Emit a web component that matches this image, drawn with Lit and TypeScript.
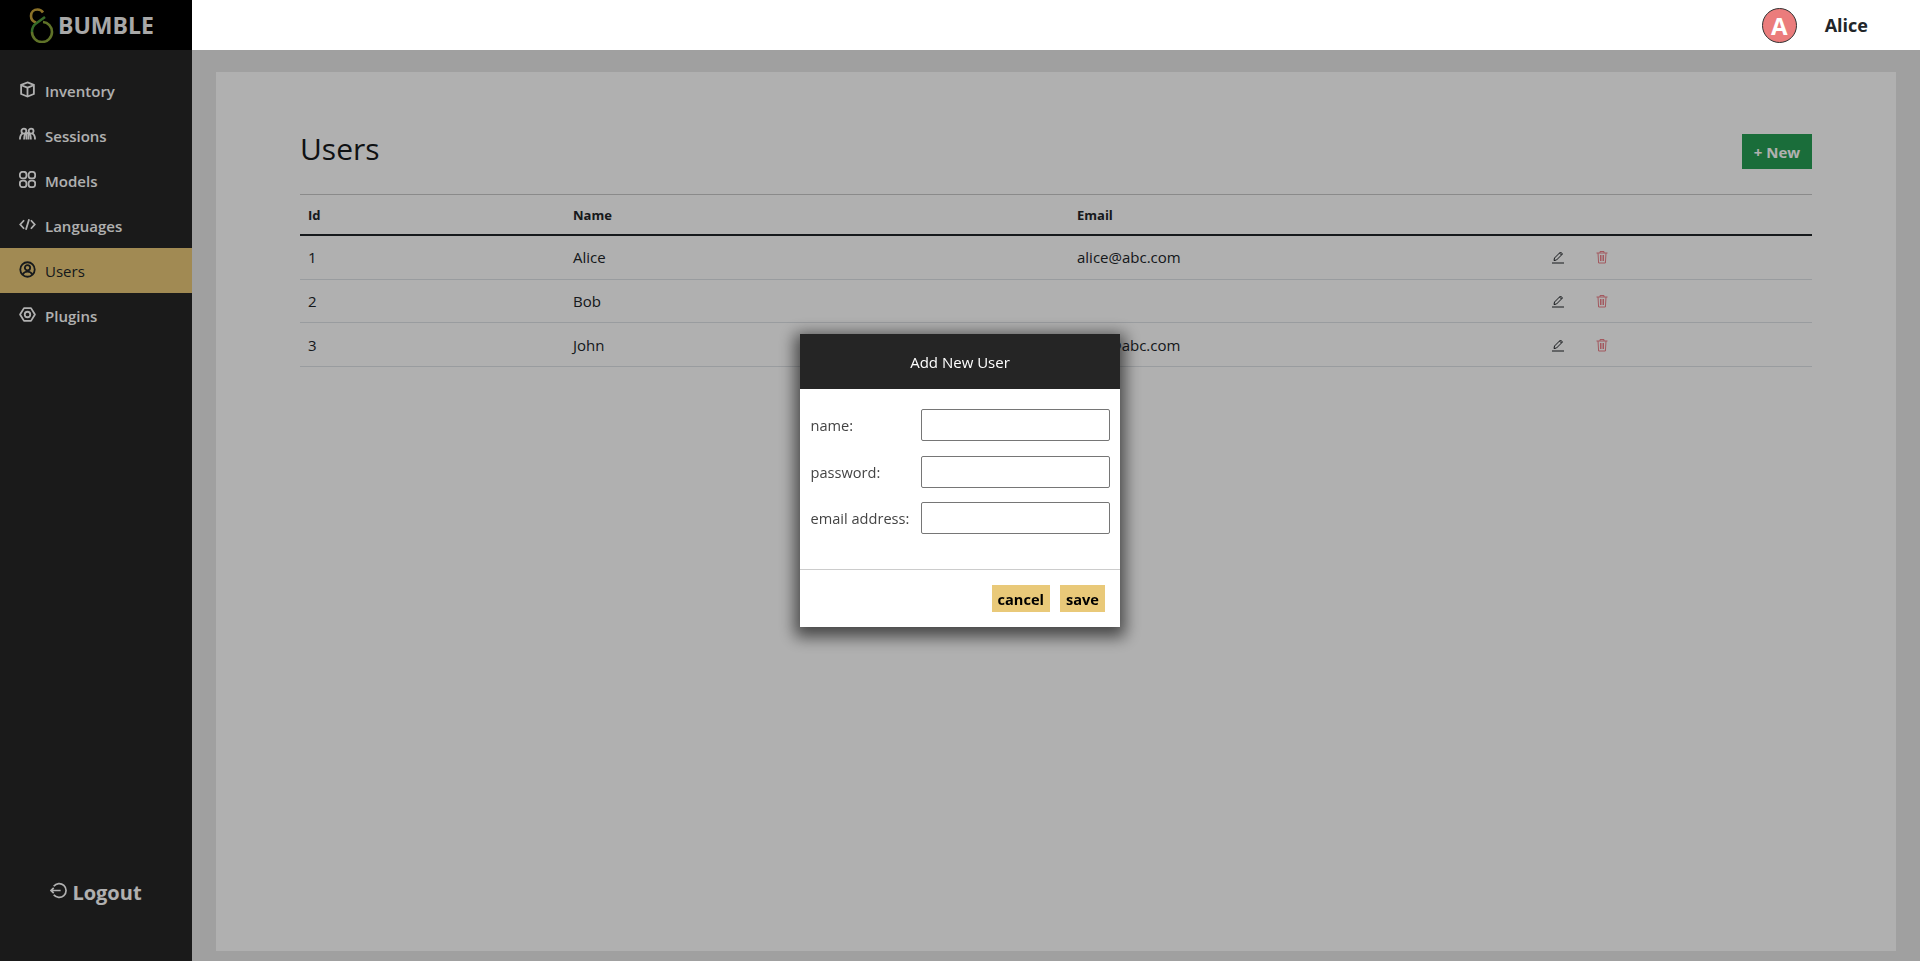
import { LitElement, html, css, svg } from "lit";
import { customElement } from "lit/decorators.js";

const navIcons: Record<string, unknown> = {
  box: svg`<path d="M8 1.300 14 3.600v8.600l-6 2.500-6-2.500V3.600z"/><path d="M2.200 4 8 6.300 13.800 4M8 6.300v8.200"/>`,
  people: svg`<circle cx="4.600" cy="4.800" r="2.300"/><circle cx="11.400" cy="4.800" r="2.300"/><path d="M.9 12.800c0-3 1-5.300 3-5.800M15.100 12.800c0-3-1-5.300-3-5.800"/><path d="M4.800 12.800c0-3.600 1-6.200 3.200-6.200s3.200 2.600 3.200 6.200"/><path d="M7 7.500v5.300M9 7.500v5.300"/>`,
  models: svg`<rect x=".8" y=".8" width="6.200" height="6.200" rx="2.600"/><rect x="9" y=".8" width="6.200" height="6.200" rx="2.600"/><rect x=".8" y="9" width="6.200" height="6.200" rx="2.600"/><rect x="9" y="9" width="6.200" height="6.200" rx="2.600"/>`,
  code: svg`<path d="M4.800 4 1.200 8l3.600 4M11.200 4l3.600 4-3.600 4M9.500 3 6.500 13"/>`,
  user: svg`<circle cx="8" cy="8" r="6.800"/><circle cx="8" cy="6.300" r="2.500"/><path d="M3.500 12.800C4.300 10.800 6 10 8 10s3.700.8 4.500 2.800"/>`,
  plugin: svg`<path d="M4.700 2h6.600L15 8l-3.700 6H4.700L1 8z" stroke-linejoin="round"/><circle cx="8" cy="8" r="2.600"/>`,
};

const navItems = [
  { label: "Inventory", icon: "box" },
  { label: "Sessions", icon: "people" },
  { label: "Models", icon: "models" },
  { label: "Languages", icon: "code" },
  { label: "Users", icon: "user", active: true },
  { label: "Plugins", icon: "plugin" },
];

const users = [
  { id: 1, name: "Alice", email: "alice@abc.com" },
  { id: 2, name: "Bob", email: "" },
  { id: 3, name: "John", email: "john@abc.com" },
];

@customElement("app-root")
export class AppRoot extends LitElement {
  static styles = css`
    :host {
      display: block;
      height: 961px;
      font-family: "Open Sans", "Noto Sans", sans-serif;
      color: #212529;
      overflow: hidden;
    }
    .page {
      display: flex;
      height: 100%;
    }
    .sidebar {
      width: 192px;
      flex: none;
      background: #262626;
      display: flex;
      flex-direction: column;
    }
    .logo {
      height: 50px;
      flex: none;
      background: #000;
      color: #f4f4f4;
      display: flex;
      align-items: center;
      padding-left: 28px;
      gap: 4px;
      font-size: 23px;
      font-weight: 700;
    }
    .logo svg {
      width: 26px;
      height: 36px;
    }
    nav {
      padding-top: 18px;
      flex: 1;
    }
    .nav-item {
      height: 45px;
      display: flex;
      align-items: center;
      gap: 9px;
      padding-left: 19px;
      color: #fff;
      font-size: 15px;
      font-weight: 600;
    }
    .nav-item.active {
      background: #e9c979;
      color: #212529;
      font-weight: 500;
    }
    .nav-item svg {
      width: 17px;
      height: 17px;
      flex: none;
      margin-top: -3px;
      fill: none;
      stroke: currentColor;
      stroke-width: 1.700;
    }
    .logout {
      height: 50px;
      margin-bottom: 44px;
      display: flex;
      align-items: center;
      justify-content: center;
      gap: 5px;
      color: #fff;
      font-size: 20px;
      font-weight: 700;
    }
    .logout svg {
      width: 17px;
      height: 17px;
      fill: none;
      stroke: currentColor;
      stroke-width: 1.600;
      margin-top: -3px;
    }
    .right {
      flex: 1;
      min-width: 0;
      display: flex;
      flex-direction: column;
    }
    header {
      height: 50px;
      flex: none;
      background: #fff;
      display: flex;
      align-items: center;
      justify-content: flex-end;
      padding-right: 52px;
      gap: 28px;
      position: relative;
      z-index: 2;
    }
    .avatar {
      width: 35px;
      height: 35px;
      box-sizing: border-box;
      border-radius: 50%;
      border: 1px solid #333;
      background: #eb7c7c;
      color: #fff;
      display: flex;
      align-items: center;
      justify-content: center;
      font-size: 24px;
      font-weight: 700;
    }
    .who {
      font-size: 18px;
      font-weight: 700;
    }
    main {
      flex: 1;
      background: #e8e8e8;
      padding: 22px 24px 10px;
      display: flex;
      min-height: 0;
    }
    .card {
      flex: 1;
      background: #fff;
      padding: 62px 84px 0;
    }
    .title-row {
      display: flex;
      justify-content: space-between;
      height: 60px;
    }
    h1 {
      margin: 0;
      font-size: 30px;
      font-weight: 500;
      line-height: 30px;
      color: #16191c;
    }
    .new {
      width: 70px;
      height: 35px;
      box-sizing: border-box;
      border: none;
      background: #269f54;
      color: #fff;
      font: 700 15px "Open Sans", sans-serif;
    }
    table {
      width: 100%;
      table-layout: fixed;
      border-collapse: collapse;
      font-size: 15px;
    }
    th {
      height: 39px;
      text-align: left;
      font-size: 13px;
      font-weight: 700;
      padding: 0 8px;
      border-top: 1px solid #c8c8c8;
      border-bottom: 2px solid #212529;
    }
    td {
      height: 42.700px;
      padding: 0 8px;
      border-bottom: 1px solid #dee2e6;
    }
    .actions {
      display: flex;
      gap: 30px;
      align-items: center;
    }
    .actions svg {
      width: 14px;
      height: 14px;
      fill: none;
      stroke-width: 1;
    }
    .edit {
      stroke: #212529;
    }
    .del {
      stroke: #ec8089;
      stroke-width: 0.9;
    }
    .overlay {
      position: fixed;
      inset: 0;
      z-index: 1;
      background: rgba(0, 0, 0, 0.31);
      display: flex;
      align-items: center;
      justify-content: center;
    }
    .modal {
      width: 320px;
      height: 293px;
      background: #fff;
      display: flex;
      flex-direction: column;
      box-shadow: 0 5px 15px 5px rgba(0, 0, 0, 0.6);
      position: relative;
      z-index: 3;
    }
    .modal-head {
      height: 55px;
      flex: none;
      background: #252525;
      color: #fff;
      display: flex;
      align-items: center;
      justify-content: center;
      font-size: 15px;
    }
    .form {
      flex: 1;
      padding: 20px 10px 0 10.500px;
      display: grid;
      grid-template-columns: 110.500px 189px;
      grid-auto-rows: 32px;
      row-gap: 14.500px;
      align-items: center;
      font-size: 14.600px;
      color: #444;
    }
    input {
      width: 100%;
      height: 32px;
      box-sizing: border-box;
      border: 1px solid #767676;
      border-radius: 2px;
      background: #fff;
    }
    .modal-foot {
      height: 58px;
      flex: none;
      border-top: 1px solid #ccc;
      display: flex;
      justify-content: flex-end;
      align-items: flex-start;
      gap: 10px;
      padding: 15px 15px 0 0;
      box-sizing: border-box;
    }
    .modal-foot button {
      height: 27px;
      border: none;
      padding: 0 6px;
      background: #e9c979;
      color: #000;
      font: 700 14.600px "Open Sans", sans-serif;
    }
  `;

  render() {
    return html`
      <div class="page">
        <aside class="sidebar">
          <div class="logo">
            <svg viewBox="0 0 26 36" fill="none" stroke-width="2.600">
              <path d="M15 5.500C13.500 3 11.500 2.500 9.500 2.500 6 2.500 3 5 3 9c0 3 2 5.500 5 6.500" stroke="#c9a43a" />
              <path d="M17 10 8 16.500C5 18.500 4 21 4 25" stroke="#4f9c3c" />
              <path d="M4 25A10 10 0 0 0 24 25C24 19.500 20 15.500 15 15" stroke="#8aa63a" />
            </svg>
            BUMBLE
          </div>
          <nav>
            ${navItems.map(
              (n) => html`
                <div class="nav-item ${n.active ? "active" : ""}">
                  <svg viewBox="0 0 16 16">${navIcons[n.icon]}</svg>
                  ${n.label}
                </div>
              `
            )}
          </nav>
          <div class="logout">
            <svg viewBox="0 0 16 16">
              <path d="M3.500 4A6.500 6.500 0 1 1 3.500 12M1 8h9M3.500 5.500 1 8l2.500 2.500" />
            </svg>
            Logout
          </div>
        </aside>
        <div class="right">
          <header>
            <div class="avatar">A</div>
            <div class="who">Alice</div>
          </header>
          <main>
            <div class="card">
              <div class="title-row">
                <h1>Users</h1>
                <button class="new">+ New</button>
              </div>
              <table>
                <colgroup>
                  <col style="width:265px" />
                  <col style="width:504px" />
                  <col style="width:474px" />
                  <col />
                </colgroup>
                <thead>
                  <tr><th>Id</th><th>Name</th><th>Email</th><th></th></tr>
                </thead>
                <tbody>
                  ${users.map(
                    (u) => html`
                      <tr>
                        <td>${u.id}</td>
                        <td>${u.name}</td>
                        <td>${u.email}</td>
                        <td>
                          <div class="actions">
                            <svg class="edit" viewBox="0 0 14 14">
                              <path d="M3 10.500 3.500 8 9.500 2l2 2-6 6zM8.500 3l2 2M1 13h12" />
                            </svg>
                            <svg class="del" viewBox="0 0 14 14">
                              <path d="M1.500 3h11M5 3V1.500h4V3M3 3l.6 10h6.800L11 3M5.500 5v6M7 5v6M8.500 5v6" />
                            </svg>
                          </div>
                        </td>
                      </tr>
                    `
                  )}
                </tbody>
              </table>
            </div>
          </main>
        </div>
      </div>
      <div class="overlay">
        <div class="modal">
          <div class="modal-head">Add New User</div>
          <div class="form">
            <label>name:</label><input />
            <label>password:</label><input />
            <label>email address:</label><input />
          </div>
          <div class="modal-foot">
            <button>cancel</button>
            <button>save</button>
          </div>
        </div>
      </div>
    `;
  }
}
